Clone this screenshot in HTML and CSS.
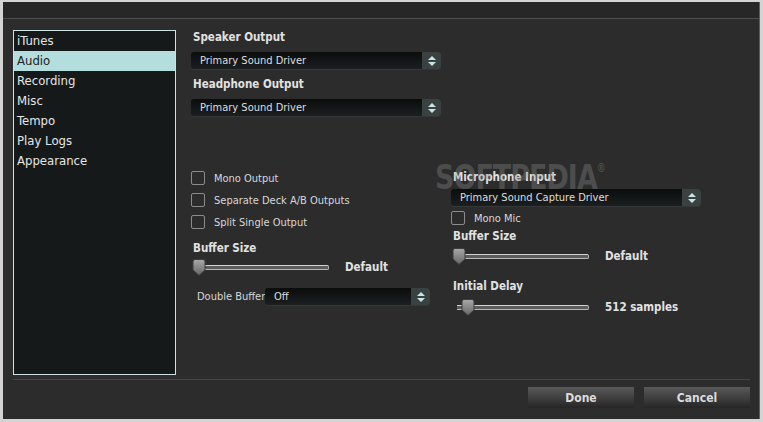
FILE: index.html
```html
<!DOCTYPE html>
<html lang="en">
<head>
    <meta charset="UTF-8">
    <title>Preferences - Audio</title>
    <link rel="stylesheet" href="styles.css">
</head>
<body>

    <div class="window">
        <div class="titlebar"></div>

        <div class="main">
            <ul class="sidebar">
                <li class="item">iTunes</li>
                <li class="item selected">Audio</li>
                <li class="item">Recording</li>
                <li class="item">Misc</li>
                <li class="item">Tempo</li>
                <li class="item">Play Logs</li>
                <li class="item">Appearance</li>
            </ul>

            <div class="panel">
                <div class="label">Speaker Output</div>
                <div class="select out-select">
                    <span class="value">Primary Sound Driver</span>
                    <span class="arrows"><i class="up"></i><i class="down"></i></span>
                </div>

                <div class="label label-gap">Headphone Output</div>
                <div class="select out-select">
                    <span class="value">Primary Sound Driver</span>
                    <span class="arrows"><i class="up"></i><i class="down"></i></span>
                </div>

                <div class="columns">
                    <div class="column">
                        <div class="check-row"><span class="box"></span>Mono Output</div>
                        <div class="check-row"><span class="box"></span>Separate Deck A/B Outputs</div>
                        <div class="check-row"><span class="box"></span>Split Single Output</div>

                        <div class="label buffer-label">Buffer Size</div>
                        <div class="slider slider-left">
                            <div class="track">
                                <svg class="thumb" width="14" height="17" viewBox="0 0 14 17"><use href="#thumb"/></svg>
                            </div>
                            <span class="slider-value">Default</span>
                        </div>

                        <div class="double-row">
                            <span class="double-label">Double Buffer</span>
                            <div class="select double-select">
                                <span class="value">Off</span>
                                <span class="arrows"><i class="up"></i><i class="down"></i></span>
                            </div>
                        </div>
                    </div>

                    <div class="column">
                        <div class="label mic-label">Microphone Input</div>
                        <div class="select mic-select">
                            <span class="value">Primary Sound Capture Driver</span>
                            <span class="arrows"><i class="up"></i><i class="down"></i></span>
                        </div>
                        <div class="check-row mono-mic"><span class="box"></span>Mono Mic</div>

                        <div class="label mic-buffer">Buffer Size</div>
                        <div class="slider mic-slider">
                            <div class="track">
                                <svg class="thumb" width="14" height="17" viewBox="0 0 14 17"><use href="#thumb"/></svg>
                            </div>
                            <span class="slider-value">Default</span>
                        </div>

                        <div class="label delay-label">Initial Delay</div>
                        <div class="slider delay-slider">
                            <div class="track">
                                <svg class="thumb" width="14" height="17" viewBox="0 0 14 17"><use href="#thumb"/></svg>
                            </div>
                            <span class="slider-value">512 samples</span>
                        </div>
                    </div>
                </div>
            </div>
        </div>

        <div class="footer">
            <div class="separator"></div>
            <div class="buttons">
                <button class="button">Done</button>
                <button class="button">Cancel</button>
            </div>
        </div>

        <div class="watermark">SOFTPEDIA<sup>&reg;</sup></div>
    </div>

    <svg width="0" height="0" style="position:absolute">
        <defs>
            <linearGradient id="thumbFill" x1="0" y1="0" x2="0" y2="1">
                <stop offset="0" stop-color="#a8a8a8"/>
                <stop offset="1" stop-color="#666"/>
            </linearGradient>
            <path id="thumb" d="M1 2.5 Q1 0.5 3 0.5 H11 Q13 0.5 13 2.5 V11 L7 16.5 L1 11 Z" fill="url(#thumbFill)" stroke="#3c3c3c" stroke-width="1"/>
        </defs>
    </svg>

</body>
</html>
```

FILE: styles.css
```css
* {
    margin: 0;
    padding: 0;
    box-sizing: border-box;
}
body {
    font-family: 'DejaVu Sans Condensed', 'DejaVu Sans', sans-serif;
    font-stretch: condensed;
    background-color: #2c2c2c;
    color: #dcdcdc;
}
.window {
    width: 763px;
    height: 422px;
    border: solid #d4d4d4;
    border-width: 2px 3px 3px 3px;
    background-color: #2c2c2c;
    box-shadow: inset -1px 0 0 #5e5e5e;
    display: flex;
    flex-direction: column;
    position: relative;
    overflow: hidden;
}
.titlebar {
    height: 17px;
    background-color: #272727;
    border-bottom: 1px solid #4e4e4e;
    margin-right: 1px;
}
.main {
    display: flex;
    padding: 11px 0 0 10px;
}
.sidebar {
    list-style: none;
    width: 163px;
    height: 345px;
    border: 1px solid #cde2e2;
    background-color: #15191a;
}
.item {
    height: 20px;
    line-height: 19px;
    padding-left: 3px;
    font-size: 13px;
    color: #e6e6e6;
}
.item.selected {
    background-color: #b3dedd;
    color: #1c2222;
}
.panel {
    margin-left: 15px;
    margin-top: 1px;
    width: 511px;
}
.label {
    font-weight: bold;
    font-size: 11.5px;
    line-height: 12px;
    height: 12px;
    padding-left: 2px;
    color: #e2e2e2;
}
.label-gap {
    margin-top: 9px;
}
.select {
    display: flex;
    height: 17px;
    border-radius: 3px;
    background: linear-gradient(#0b0d0d, #1c1f1f);
    box-shadow: 0 1px 0 #363838;
    overflow: hidden;
}
.out-select {
    width: 250px;
    margin-top: 9px;
}
.value {
    flex: 1;
    padding-left: 9px;
    font-size: 11px;
    line-height: 17px;
    color: #dedede;
    white-space: nowrap;
}
.arrows {
    width: 19px;
    background-color: #3a4141;
    display: flex;
    flex-direction: column;
    align-items: center;
    justify-content: center;
    gap: 2px;
}
.arrows i {
    width: 0;
    height: 0;
    border-left: 4px solid transparent;
    border-right: 4px solid transparent;
}
.arrows .up {
    border-bottom: 4px solid #c6e6e6;
}
.arrows .down {
    border-top: 4px solid #c6e6e6;
}
.columns {
    display: grid;
    grid-template-columns: 250px 250px;
    column-gap: 10px;
    margin-top: 51px;
}
.column {
    display: flex;
    flex-direction: column;
}
.check-row {
    display: flex;
    align-items: center;
    height: 22px;
    font-size: 11px;
    color: #d8d8d8;
}
.box {
    width: 14px;
    height: 14px;
    border: 1px solid #8c8c8c;
    border-radius: 2px;
    margin-right: 9px;
}
.buffer-label {
    margin-top: 9px;
}
.slider {
    display: flex;
    align-items: center;
    height: 16px;
}
.track {
    position: relative;
    width: 136px;
    height: 5px;
    border-top: 1px solid #d2d2d2;
    border-bottom: 1px solid #b8b8b8;
    border-right: 1px solid #b8b8b8;
    border-radius: 0 2px 2px 0;
    background-color: #5c5c5c;
}
.thumb {
    position: absolute;
    left: -1px;
    top: -7px;
}
.slider-value {
    font-weight: bold;
    font-size: 11.5px;
    color: #e2e2e2;
    margin-left: 16px;
}
.slider-left {
    margin-top: 5px;
    padding-left: 2px;
}
.double-row {
    display: flex;
    align-items: center;
    margin-top: 13px;
    padding-left: 6px;
}
.double-label {
    width: 68px;
    overflow: hidden;
    white-space: nowrap;
    font-size: 11px;
    color: #d8d8d8;
}
.double-select {
    width: 165px;
}
.mic-label {
    margin-top: 4px;
}
.mic-select {
    width: 250px;
    margin-top: 6px;
}
.mono-mic {
    height: 14px;
    margin-top: 5px;
}
.mic-buffer {
    margin-top: 5px;
}
.mic-slider {
    margin-top: 6px;
    padding-left: 2px;
}
.delay-label {
    margin-top: 16px;
}
.delay-slider {
    margin-top: 7px;
    padding-left: 6px;
}
.delay-slider .track {
    width: 132px;
}
.delay-slider .thumb {
    left: 4px;
}
.footer {
    padding: 0 10px;
}
.separator {
    margin-top: 4px;
    height: 1px;
    background-color: #454545;
}
.buttons {
    display: flex;
    justify-content: flex-end;
    gap: 10px;
    margin-top: 7px;
}
.button {
    width: 106px;
    height: 21px;
    border: none;
    background: linear-gradient(#595959, #262626);
    color: #dcdcdc;
    font-family: 'DejaVu Sans Condensed', 'DejaVu Sans', sans-serif;
    font-stretch: condensed;
    font-weight: bold;
    font-size: 12px;
}
.watermark {
    position: absolute;
    left: 432px;
    top: 157px;
    font-weight: bold;
    font-size: 30px;
    letter-spacing: -1px;
    color: rgba(140, 140, 140, 0.35);
    transform: scaleY(1.15);
    pointer-events: none;
}
.watermark sup {
    font-size: 10px;
    vertical-align: 14px;
}
```
